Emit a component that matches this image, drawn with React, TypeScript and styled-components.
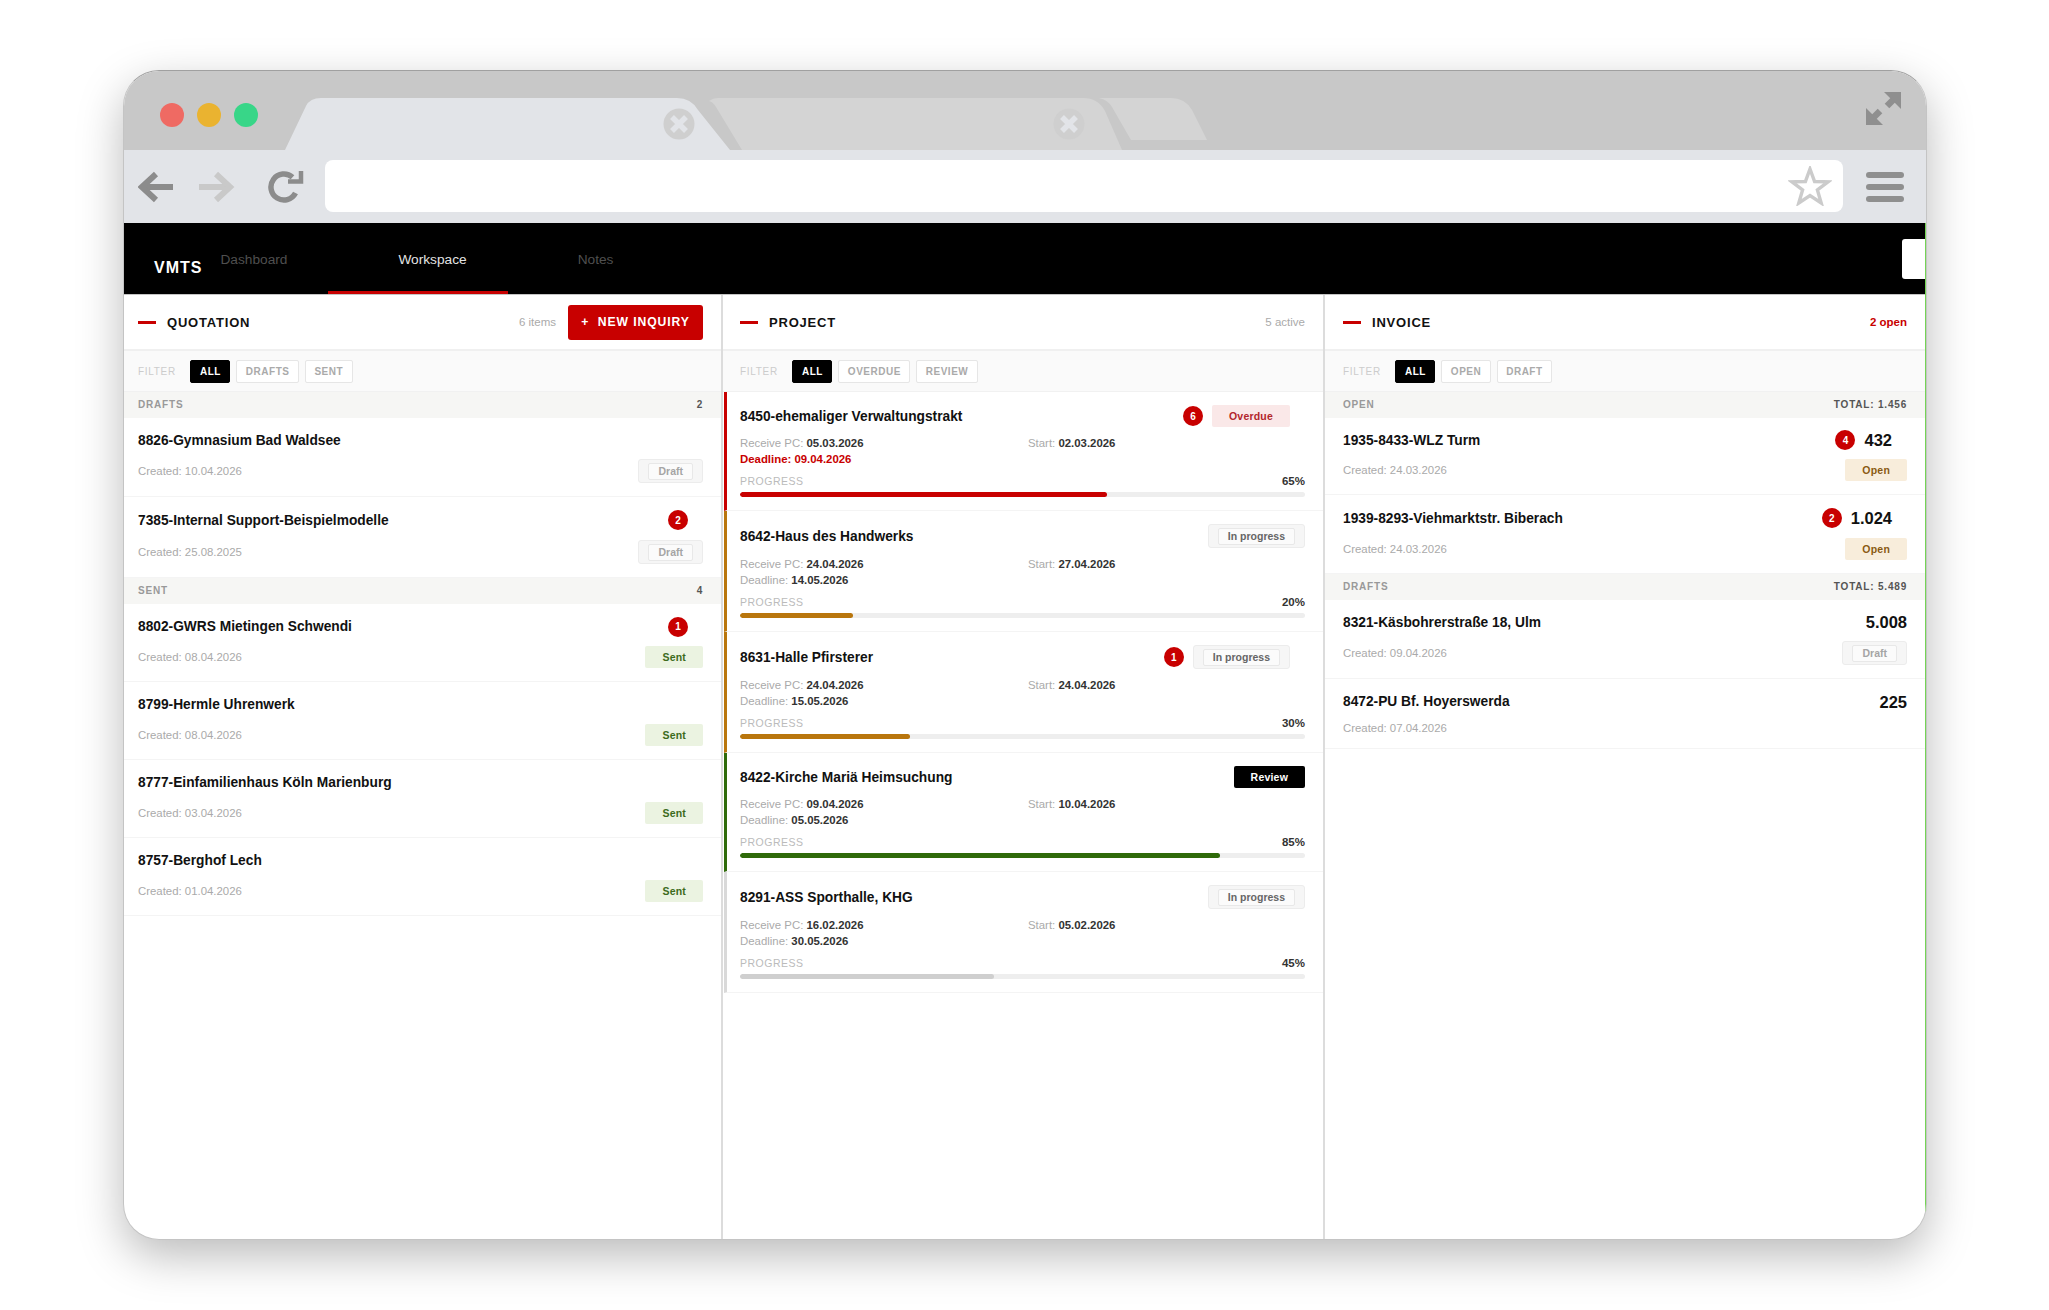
import React from "react";
import styled, {createGlobalStyle} from "styled-components";

const RED = "#c80000";
const AMBER = "#b9760d";
const GREEN = "#2f6a0a";

const GlobalStyle = createGlobalStyle`
    html, body {
        margin: 0;
        background: #fff;
        font-family: "Liberation Sans", Arial, sans-serif;
    }
    * {
        box-sizing: border-box;
    }
`;

const Page = styled.div`
    width: 2049px;
    height: 1310px;
    padding: 70px 0 0 123px;
    overflow: hidden;
`;

const Frame = styled.div`
    width: 1804px;
    height: 1170px;
    display: flex;
    flex-direction: column;
    border: 1px solid #c4c4c4;
    border-top-color: #a0a0a0;
    border-radius: 36px;
    overflow: hidden;
    background: #fff;
    box-shadow: 0 16px 46px rgba(0, 0, 0, 0.27);
`;

const TitleBar = styled.div`
    height: 79px;
    flex: none;
    display: flex;
    align-items: flex-end;
    background: #c8c8c8;
`;

const Lights = styled.div`
    display: flex;
    align-self: flex-start;
    gap: 13px;
    margin: 32px 0 0 36px;
`;

const Light = styled.span`
    width: 24px;
    height: 24px;
    border-radius: 50%;
    background: ${({$color}) => $color};
`;

const TabStrip = styled.svg`
    display: block;
    margin-left: 27px;
`;

const ExpandIcon = styled.svg`
    align-self: flex-start;
    margin: 21px 24px 0 auto;
`;

const Toolbar = styled.div`
    height: 73px;
    flex: none;
    display: flex;
    align-items: center;
    padding: 0 22px 0 14px;
    background: #e2e4e8;
`;

const ToolIcon = styled.svg`
    flex: none;
    margin-right: ${({$gap}) => $gap}px;
`;

const UrlBar = styled.div`
    width: 1518px;
    height: 52px;
    display: flex;
    align-items: center;
    justify-content: flex-end;
    padding-right: 11px;
    margin: -1px 23px 0 0;
    background: #fff;
    border-radius: 8px;
`;

const Burger = styled.div`
    width: 38px;
    display: flex;
    flex-direction: column;
    gap: 6px;

    span {
        height: 6px;
        border-radius: 3px;
        background: #8f8f8f;
    }
`;

const Content = styled.div`
    flex: 1;
    min-height: 0;
    display: flex;
    flex-direction: column;
    border-right: 1px solid #74d455;
`;

const Nav = styled.nav`
    height: 71px;
    flex: none;
    display: flex;
    align-items: stretch;
    padding-left: 30px;
    background: #000;
`;

const Logo = styled.span`
    align-self: center;
    padding-top: 19px;
    margin-right: 18px;
    color: #fff;
    font-size: 16px;
    font-weight: 700;
    letter-spacing: 1px;
`;

const NavLink = styled.a`
    display: flex;
    align-items: center;
    padding: 5px 41px 0 ${({$first}) => ($first ? 0 : 70)}px;
    font-size: 13.7px;
    color: ${({$active}) => ($active ? "#e4e4e4" : "#4f4f4f")};
    border-bottom: 3px solid ${({$active}) => ($active ? RED : "transparent")};
`;

const NavTab = styled.div`
    width: 23px;
    height: 40px;
    align-self: center;
    margin-left: auto;
    background: #fff;
    border-radius: 3px 0 0 3px;
`;

const Columns = styled.div`
    flex: 1;
    min-height: 0;
    display: grid;
    grid-template-columns: 599px 602px 1fr;
    border-top: 1px solid #c4c4c4;
`;

const Column = styled.section`
    --l: ${({$l}) => $l}px;
    --r: ${({$r}) => $r}px;
    min-width: 0;
    border-right: ${({$last}) => ($last ? "none" : "2px solid #dcdcdc")};
`;

const Header = styled.header`
    height: 56px;
    display: flex;
    align-items: center;
    padding: 0 var(--r) 0 var(--l);
    border-bottom: 2px solid #f0f0f0;
`;

const Dash = styled.span`
    width: 18px;
    height: 3px;
    margin-right: 11px;
    background: ${RED};
`;

const HeaderTitle = styled.h2`
    margin: 0 auto 0 0;
    font-size: 13px;
    font-weight: 700;
    letter-spacing: 0.8px;
    color: #111;
`;

const HeaderNote = styled.span`
    font-size: 11.5px;
    font-weight: ${({$alert}) => ($alert ? 700 : 400)};
    color: ${({$alert}) => ($alert ? RED : "#aaa")};
`;

const NewButton = styled.button`
    width: 135px;
    height: 35px;
    margin-left: 12px;
    padding: 0;
    border: none;
    border-radius: 3px;
    background: ${RED};
    color: #fff;
    font-family: inherit;
    font-size: 12.2px;
    font-weight: 700;
    letter-spacing: 0.9px;
    white-space: pre;
`;

const FilterRow = styled.div`
    height: 41px;
    display: flex;
    align-items: center;
    gap: 6px;
    padding: 0 var(--r) 0 var(--l);
    background: #fafafa;
    border-bottom: 1px solid #f1f1f1;
`;

const FilterLabel = styled.span`
    margin-right: 8.5px;
    font-size: 10px;
    letter-spacing: 0.7px;
    color: #ccc;
`;

const FilterButton = styled.button`
    height: 23px;
    padding: 0 8.5px;
    border: 1px solid ${({$active}) => ($active ? "#000" : "#e6e6e6")};
    border-radius: 2px;
    background: ${({$active}) => ($active ? "#000" : "#fff")};
    color: ${({$active}) => ($active ? "#fff" : "#aaa")};
    font-family: inherit;
    font-size: 10px;
    font-weight: 700;
    letter-spacing: 0.5px;
`;

const GroupHead = styled.div`
    height: 26px;
    display: flex;
    align-items: center;
    justify-content: space-between;
    padding: 0 var(--r) 1px var(--l);
    background: #f6f6f4;
    font-size: 10px;
    font-weight: 700;
    letter-spacing: 0.8px;
    color: #999;

    b {
        color: #555;
    }
`;

const Item = styled.div`
    padding: 11px var(--r) 13px var(--l);
    border-bottom: 1px solid #f4f4f4;
`;

const TopRow = styled.div`
    min-height: ${({$h}) => $h || 22}px;
    display: flex;
    align-items: center;
    justify-content: space-between;
`;

const BottomRow = styled.div`
    display: flex;
    align-items: center;
    justify-content: space-between;
    margin-top: 8px;
`;

const ItemTitle = styled.div`
    font-size: 13.75px;
    font-weight: 700;
    color: #111;
`;

const Created = styled.div`
    font-size: 11.4px;
    line-height: 14px;
    color: #aaa;
`;

const Extras = styled.div`
    display: flex;
    align-items: center;
    gap: 9px;
    padding-right: ${({$inset}) => ($inset ? 15 : 0)}px;
`;

const Count = styled.span`
    width: 20px;
    height: 20px;
    display: flex;
    align-items: center;
    justify-content: center;
    border-radius: 50%;
    background: ${RED};
    color: #fff;
    font-size: 10px;
    font-weight: 700;
`;

const Amount = styled.span`
    font-size: 16.5px;
    line-height: 22px;
    font-weight: 700;
    color: #111;
`;

const Pill = styled.span`
    height: 22px;
    display: inline-flex;
    align-items: center;
    padding: 0 17px;
    border-radius: 2px;
    font-size: 10.5px;
    font-weight: 700;
    letter-spacing: 0.2px;
    background: ${({$bg}) => $bg};
    color: ${({$fg}) => $fg};
`;

const GhostOuter = styled.span`
    height: 24px;
    display: inline-flex;
    align-items: center;
    padding: 0 9px;
    background: #f6f6f6;
    border: 1px solid #ececec;
    border-radius: 3px;
`;

const GhostInner = styled.span`
    height: 17px;
    display: inline-flex;
    align-items: center;
    padding: 0 9px;
    background: #fbfbfb;
    border: 1px solid #e8e8e8;
    border-radius: 2px;
    font-size: 10.5px;
    font-weight: 700;
    color: ${({$fg}) => $fg};
`;

const Card = styled.article`
    margin-left: 1px;
    padding: 13px var(--r) 13px 13px;
    border-left: 3px solid ${({$color}) => $color};
    border-bottom: 1px solid #f4f4f4;
`;

const Meta = styled.div`
    display: grid;
    grid-template-columns: 288px 1fr;
    margin-top: 8px;
    font-size: 11.4px;
    line-height: 16px;
    color: #aaa;

    b {
        color: #333;
    }
`;

const Late = styled.span`
    font-weight: 700;
    color: ${RED};
`;

const ProgressHead = styled.div`
    height: 14px;
    display: flex;
    align-items: center;
    justify-content: space-between;
    margin-top: 7px;
    font-size: 10.5px;
    letter-spacing: 0.5px;
    color: #bbb;

    b {
        font-size: 11.5px;
        letter-spacing: 0;
        color: #333;
    }
`;

const Track = styled.div`
    height: 5px;
    margin-top: 4px;
    border-radius: 3px;
    overflow: hidden;
    background: #eee;
`;

const Fill = styled.div`
    height: 100%;
    border-radius: 3px;
    background: ${({$color}) => $color};
`;

const Ghost = ({children, fg = "#999"}) => (
    <GhostOuter>
        <GhostInner $fg={fg}>{children}</GhostInner>
    </GhostOuter>
);

const Sent = () => <Pill $bg="#ebf3e1" $fg="#3d6b1c">Sent</Pill>;
const Open = () => <Pill $bg="#f8eddb" $fg="#8a5a12">Open</Pill>;

const ColumnHead = ({title, children}) => (
    <Header>
        <Dash />
        <HeaderTitle>{title}</HeaderTitle>
        {children}
    </Header>
);

const Filters = ({options}) => (
    <FilterRow>
        <FilterLabel>FILTER</FilterLabel>
        <FilterButton $active>ALL</FilterButton>
        {options.map((o) => (
            <FilterButton key={o}>{o}</FilterButton>
        ))}
    </FilterRow>
);

const Quote = ({title, created, count, draft, top}) => (
    <Item>
        <TopRow $h={top}>
            <ItemTitle>{title}</ItemTitle>
            {count && (
                <Extras $inset>
                    <Count>{count}</Count>
                </Extras>
            )}
        </TopRow>
        <BottomRow>
            <Created>Created: {created}</Created>
            {draft ? <Ghost fg="#a5a5a5">Draft</Ghost> : <Sent />}
        </BottomRow>
    </Item>
);

const Invoice = ({title, created, count, amount, status, top}) => (
    <Item>
        <TopRow $h={top}>
            <ItemTitle>{title}</ItemTitle>
            <Extras $inset={!!count}>
                {count && <Count>{count}</Count>}
                <Amount>{amount}</Amount>
            </Extras>
        </TopRow>
        <BottomRow>
            <Created>Created: {created}</Created>
            {status}
        </BottomRow>
    </Item>
);

const Project = ({title, count, status, inset, receive, start, deadline, late, pct, color, fill}) => (
    <Card $color={color}>
        <TopRow>
            <ItemTitle>{title}</ItemTitle>
            <Extras $inset={inset}>
                {count && <Count>{count}</Count>}
                {status}
            </Extras>
        </TopRow>
        <Meta>
            <span>
                Receive PC: <b>{receive}</b>
            </span>
            <span>
                Start: <b>{start}</b>
            </span>
            {late ? (
                <Late>Deadline: {deadline}</Late>
            ) : (
                <span>
                    Deadline: <b>{deadline}</b>
                </span>
            )}
        </Meta>
        <ProgressHead>
            PROGRESS
            <b>{pct}%</b>
        </ProgressHead>
        <Track>
            <Fill $color={fill || color} style={{width: `${pct}%`}} />
        </Track>
    </Card>
);

const CloseDot = ({x}) => (
    <g>
        <circle cx={x} cy="26" r="15.5" fill="#cfcfcf" />
        <path d={`M${x - 7} 19l14 14M${x + 7} 19l-14 14`} stroke="#e2e4e8" strokeWidth="5.5" />
    </g>
);

const Tabs = () => (
    <TabStrip width="926" height="52" viewBox="0 0 926 52">
        <path d="M837 52 L820 13 Q813 0 798 0 L433 0 Q428 0 424 3 Q428 4 431 9 L457 52 Z" fill="#d4d4d4" />
        <path d="M846 42 L827 9 Q823 2 814 0 L886 0 Q900 0 907 12 L922 42 Z" fill="#d4d4d4" />
        <path d="M0 52 L21 8 Q25 0 36 0 L392 0 Q406 0 413 12 L445 52 Z" fill="#e2e4e8" />
        <CloseDot x={394} />
        <CloseDot x={784} />
    </TabStrip>
);

const App = () => (
    <Page>
        <GlobalStyle />
        <Frame>
            <TitleBar>
                <Lights>
                    <Light $color="#ef6a63" />
                    <Light $color="#eab330" />
                    <Light $color="#38d688" />
                </Lights>
                <Tabs />
                <ExpandIcon width="36" height="34" viewBox="0 0 36 34">
                    <path d="M18 0H35V17Z" fill="#8f8f8f" />
                    <path d="M27 8L21 14" stroke="#8f8f8f" strokeWidth="6.5" />
                    <path d="M0 16V33H17Z" fill="#8f8f8f" />
                    <path d="M14 19L8 25" stroke="#8f8f8f" strokeWidth="6.5" />
                </ExpandIcon>
            </TitleBar>
            <Toolbar>
                <ToolIcon width="36" height="32" viewBox="0 0 36 32" $gap={25}>
                    <path d="M6 16H35" stroke="#8c8c8c" strokeWidth="6" fill="none" />
                    <path d="M18 3L4 16L18 29" stroke="#8c8c8c" strokeWidth="6" fill="none" />
                </ToolIcon>
                <ToolIcon width="36" height="32" viewBox="0 0 36 32" $gap={33}>
                    <path d="M0 16H29" stroke="#c9c9c9" strokeWidth="6" fill="none" />
                    <path d="M17 3L31 16L17 29" stroke="#c9c9c9" strokeWidth="6" fill="none" />
                </ToolIcon>
                <ToolIcon width="36" height="36" viewBox="0 0 36 36" $gap={21}>
                    <path d="M24.5 8.2A13 13 0 1 0 27.5 24" stroke="#8c8c8c" strokeWidth="5.5" fill="none" />
                    <path d="M33 2V12.5H20" stroke="#8c8c8c" strokeWidth="4.5" fill="none" />
                </ToolIcon>
                <UrlBar>
                    <svg width="44" height="40" viewBox="0 0 44 40">
                        <path
                            d="M22 3L26.6 15.5L40 15.9L29.4 24L33.2 37L22 29.5L10.8 37L14.6 24L4 15.9L17.4 15.5Z"
                            fill="none"
                            stroke="#cbcbcb"
                            strokeWidth="3.4"
                        />
                    </svg>
                </UrlBar>
                <Burger>
                    <span />
                    <span />
                    <span />
                </Burger>
            </Toolbar>
            <Content>
                <Nav>
                    <Logo>VMTS</Logo>
                    <NavLink $first>Dashboard</NavLink>
                    <NavLink $active>Workspace</NavLink>
                    <NavLink>Notes</NavLink>
                    <NavTab />
                </Nav>
                <Columns>
                    <Column $l={14} $r={18}>
                        <ColumnHead title="QUOTATION">
                            <HeaderNote>6 items</HeaderNote>
                            <NewButton>{"+  NEW INQUIRY"}</NewButton>
                        </ColumnHead>
                        <Filters options={["DRAFTS", "SENT"]} />
                        <GroupHead>
                            DRAFTS
                            <b>2</b>
                        </GroupHead>
                        <Quote title="8826-Gymnasium Bad Waldsee" created="10.04.2026" draft />
                        <Quote title="7385-Internal Support-Beispielmodelle" created="25.08.2025" count={2} top={24} draft />
                        <GroupHead>
                            SENT
                            <b>4</b>
                        </GroupHead>
                        <Quote title="8802-GWRS Mietingen Schwendi" created="08.04.2026" count={1} top={23} />
                        <Quote title="8799-Hermle Uhrenwerk" created="08.04.2026" top={23} />
                        <Quote title="8777-Einfamilienhaus Köln Marienburg" created="03.04.2026" top={23} />
                        <Quote title="8757-Berghof Lech" created="01.04.2026" top={23} />
                    </Column>
                    <Column $l={17} $r={18}>
                        <ColumnHead title="PROJECT">
                            <HeaderNote>5 active</HeaderNote>
                        </ColumnHead>
                        <Filters options={["OVERDUE", "REVIEW"]} />
                        <Project
                            title="8450-ehemaliger Verwaltungstrakt"
                            count={6}
                            inset
                            status={<Pill $bg="#fae8e8" $fg="#b3262c">Overdue</Pill>}
                            receive="05.03.2026"
                            start="02.03.2026"
                            deadline="09.04.2026"
                            late
                            pct={65}
                            color={RED}
                        />
                        <Project
                            title="8642-Haus des Handwerks"
                            status={<Ghost fg="#666">In progress</Ghost>}
                            receive="24.04.2026"
                            start="27.04.2026"
                            deadline="14.05.2026"
                            pct={20}
                            color={AMBER}
                        />
                        <Project
                            title="8631-Halle Pfirsterer"
                            count={1}
                            inset
                            status={<Ghost fg="#666">In progress</Ghost>}
                            receive="24.04.2026"
                            start="24.04.2026"
                            deadline="15.05.2026"
                            pct={30}
                            color={AMBER}
                        />
                        <Project
                            title="8422-Kirche Mariä Heimsuchung"
                            status={<Pill $bg="#000" $fg="#fff">Review</Pill>}
                            receive="09.04.2026"
                            start="10.04.2026"
                            deadline="05.05.2026"
                            pct={85}
                            color={GREEN}
                        />
                        <Project
                            title="8291-ASS Sporthalle, KHG"
                            status={<Ghost fg="#666">In progress</Ghost>}
                            receive="16.02.2026"
                            start="05.02.2026"
                            deadline="30.05.2026"
                            pct={45}
                            color="#d9d9d9"
                            fill="#cfcfcf"
                        />
                    </Column>
                    <Column $l={18} $r={18} $last>
                        <ColumnHead title="INVOICE">
                            <HeaderNote $alert>2 open</HeaderNote>
                        </ColumnHead>
                        <Filters options={["OPEN", "DRAFT"]} />
                        <GroupHead>
                            OPEN
                            <b>TOTAL: 1.456</b>
                        </GroupHead>
                        <Invoice title="1935-8433-WLZ Turm" created="24.03.2026" count={4} amount="432" status={<Open />} />
                        <Invoice
                            title="1939-8293-Viehmarktstr. Biberach"
                            created="24.03.2026"
                            count={2}
                            amount="1.024"
                            top={24}
                            status={<Open />}
                        />
                        <GroupHead>
                            DRAFTS
                            <b>TOTAL: 5.489</b>
                        </GroupHead>
                        <Invoice
                            title="8321-Käsbohrerstraße 18, Ulm"
                            created="09.04.2026"
                            amount="5.008"
                            status={<Ghost fg="#a5a5a5">Draft</Ghost>}
                        />
                        <Invoice title="8472-PU Bf. Hoyerswerda" created="07.04.2026" amount="225" top={23} />
                    </Column>
                </Columns>
            </Content>
        </Frame>
    </Page>
);

export default App;
